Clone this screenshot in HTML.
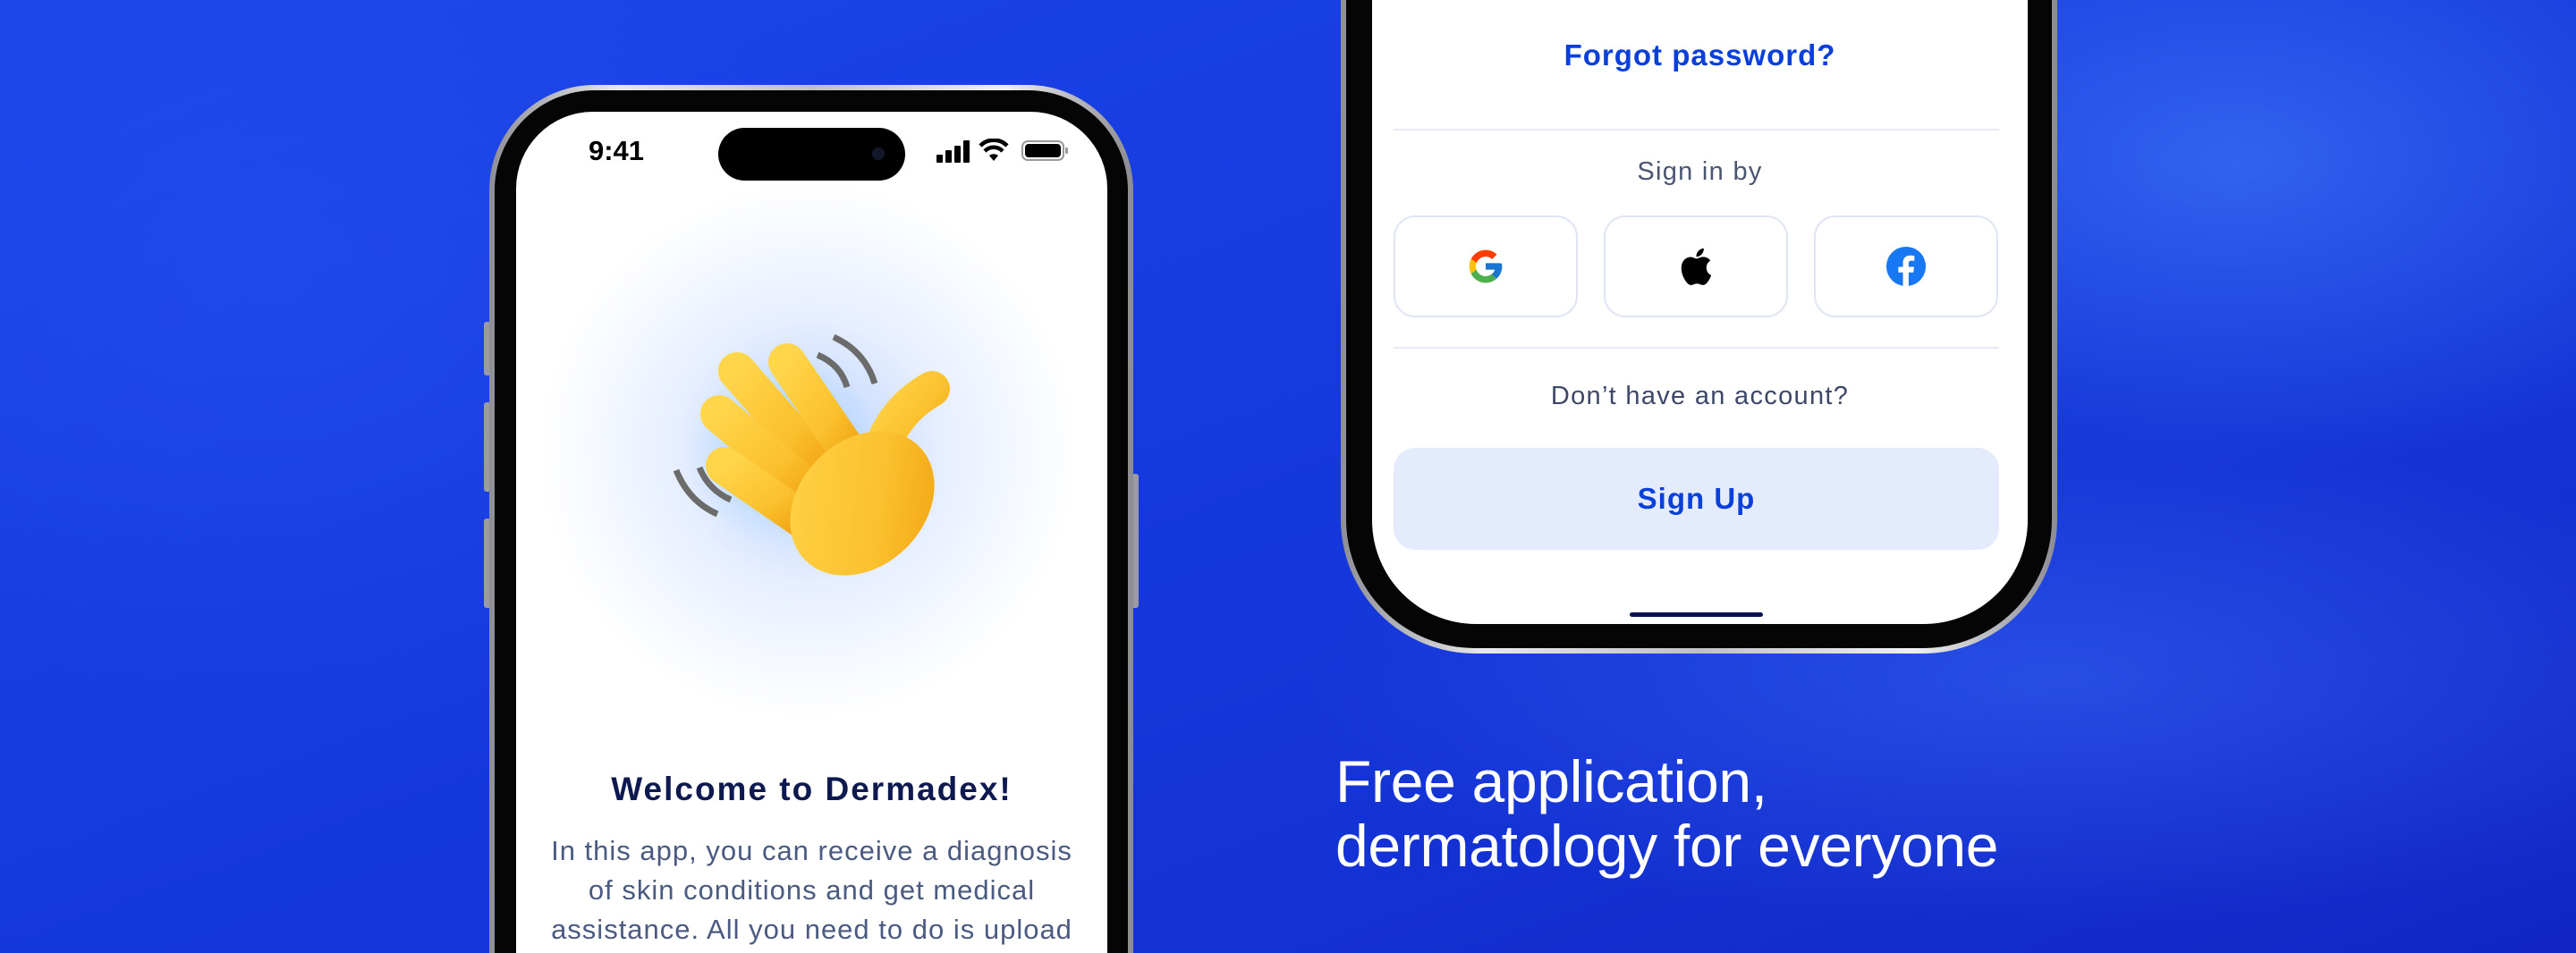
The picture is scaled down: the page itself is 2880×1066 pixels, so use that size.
<!DOCTYPE html>
<html><head><meta charset="utf-8"><style>
*{margin:0;padding:0;box-sizing:border-box}
html,body{width:2880px;height:1066px;overflow:hidden}
body{font-family:"Liberation Sans",sans-serif}
#w{position:relative;width:2880px;height:1066px;overflow:hidden;
background:
radial-gradient(ellipse 900px 500px at 2500px 180px, rgba(80,140,255,.5), rgba(80,140,255,0) 70%),
radial-gradient(ellipse 1200px 400px at 2300px 760px, rgba(70,120,250,.4), rgba(70,120,250,0) 70%),
radial-gradient(ellipse 900px 700px at 300px 300px, rgba(40,80,240,.5), rgba(40,80,240,0) 70%),
linear-gradient(160deg,#1d46ea 0%,#163be0 40%,#1433d6 70%,#1126c4 100%);}
.abs{position:absolute}
.frame{position:absolute;background:linear-gradient(90deg,#8d8f95,#e8e8ea 20%,#bfc0c4 50%,#f0f0f2 80%,#8b8c92);}
.bezel{position:absolute;background:#050505}
.screen{position:absolute;background:#fff;overflow:hidden}
.c{position:absolute;left:0;right:0;text-align:center}
.btn{position:absolute;width:206px;height:114px;border:2px solid #dfe5f3;border-radius:24px;background:#fff;display:flex;align-items:center;justify-content:center}
</style></head><body><div id="w">

<!-- Left phone -->
<div class="abs" style="left:541px;top:360px;width:8px;height:60px;background:#9a9ca2;border-radius:3px"></div>
<div class="abs" style="left:541px;top:450px;width:8px;height:100px;background:#9a9ca2;border-radius:3px"></div>
<div class="abs" style="left:541px;top:580px;width:8px;height:100px;background:#9a9ca2;border-radius:3px"></div>
<div class="abs" style="left:1265px;top:530px;width:8px;height:150px;background:#9a9ca2;border-radius:3px"></div>
<div class="frame" style="left:547px;top:95px;width:720px;height:971px;border-radius:118px 118px 0 0"></div>
<div class="bezel" style="left:553px;top:101px;width:708px;height:965px;border-radius:112px 112px 0 0"></div>
<div class="screen" style="left:577px;top:125px;width:661px;height:941px;border-radius:86px 86px 0 0">
  <div class="abs" style="left:0;top:0;width:661px;height:700px;background:radial-gradient(circle 300px at 327px 380px,rgba(120,170,255,.55),rgba(160,190,255,.25) 50%,rgba(255,255,255,0) 100%)"></div>
  <div class="abs" style="left:190px;top:270px;width:220px;height:220px;background:radial-gradient(circle,rgba(130,210,255,.45),rgba(130,210,255,0) 70%)"></div>
  <div class="abs" style="left:77px;top:26px;width:70px;font-size:31px;font-weight:700;color:#000;text-align:center">9:41</div>
  <div class="abs" style="left:226px;top:18px;width:209px;height:59px;background:#000;border-radius:30px"></div>
  <div class="abs" style="left:398px;top:40px;width:14px;height:14px;background:#12182a;border-radius:50%"></div>
  <div class="abs" style="left:470px;top:48px;width:7px;height:9px;background:#000;border-radius:1px"></div>
  <div class="abs" style="left:480px;top:43px;width:7px;height:14px;background:#000;border-radius:1px"></div>
  <div class="abs" style="left:490px;top:38px;width:7px;height:19px;background:#000;border-radius:1px"></div>
  <div class="abs" style="left:500px;top:32px;width:7px;height:25px;background:#000;border-radius:1px"></div>
  <svg class="abs" style="left:517px;top:30px" width="34" height="26" viewBox="0 0 34 26"><path d="M17 25 L12 19 A8 8 0 0 1 22 19 Z" fill="#000"/><path d="M7 14 A14 14 0 0 1 27 14" stroke="#000" stroke-width="4.5" fill="none"/><path d="M2 8 A21 21 0 0 1 32 8" stroke="#000" stroke-width="4.5" fill="none"/></svg>
  <div class="abs" style="left:565px;top:32px;width:48px;height:23px;border:2px solid #999;border-radius:7px;padding:2px"><div style="width:100%;height:100%;background:#000;border-radius:4px"></div></div>
  <div class="abs" style="left:614px;top:40px;width:3px;height:7px;background:#999;border-radius:1px"></div>
  <!-- hand -->
  <svg class="abs" style="left:165px;top:238px" width="340" height="320" viewBox="0 0 340 320">
    <defs><linearGradient id="h" x1="0" y1="0" x2="1" y2="1"><stop offset="0" stop-color="#ffd54a"/><stop offset=".6" stop-color="#fbc02d"/><stop offset="1" stop-color="#f0a010"/></linearGradient></defs>
    <g transform="translate(0,20)">
    <g stroke="#6b6b6b" stroke-width="7" fill="none">
      <path d="M190 -6 Q225 10 236 46"/><path d="M172 14 Q198 25 205 50"/>
      <path d="M14 143 Q28 178 60 192"/><path d="M40 140 Q50 165 75 176"/>
    </g>
    <g stroke="url(#h)" stroke-width="42" stroke-linecap="round" fill="none">
      <line x1="82" y1="32" x2="185" y2="150"/>
      <line x1="138" y1="22" x2="215" y2="135"/>
      <line x1="62" y1="80" x2="175" y2="175"/>
      <line x1="68" y1="138" x2="165" y2="205"/>
      <path d="M238 140 Q250 80 300 52" stroke-width="40"/>
    </g>
    <ellipse cx="222" cy="180" rx="90" ry="70" transform="rotate(-45 222 180)" fill="url(#h)"/>
    </g>
  </svg>
  <div class="c" style="top:737px;font-size:37px;font-weight:700;color:#0e1a4f;letter-spacing:2px">Welcome to Dermadex!</div>
  <div class="c" style="top:805px;font-size:31px;line-height:44px;color:#4a5a80;padding:0 10px;letter-spacing:1px">In this app, you can receive a diagnosis<br>of skin conditions and get medical<br>assistance. All you need to do is upload</div>
</div>

<!-- Right phone -->
<div class="frame" style="left:1499px;top:-400px;width:801px;height:1131px;border-radius:150px"></div>
<div class="bezel" style="left:1505px;top:-400px;width:789px;height:1125px;border-radius:144px"></div>
<div class="screen" style="left:1534px;top:-400px;width:733px;height:1098px;border-radius:116px">
  <div class="c" style="top:443px;font-size:33px;font-weight:700;color:#0a3fd9;letter-spacing:1px">Forgot password?</div>
  <div class="abs" style="left:24px;top:544px;width:677px;height:2px;background:#e6eaf2"></div>
  <div class="c" style="top:576px;font-size:29px;color:#4a5570;letter-spacing:1.3px">Sign in by</div>
  <div class="btn" style="left:24px;top:641px">
    <svg width="44" height="44" viewBox="0 0 48 48"><path d="M43.6 20.5H42V20H24v8h11.3C33.7 32.7 29.2 36 24 36c-6.6 0-12-5.4-12-12s5.4-12 12-12c3.1 0 5.8 1.2 7.9 3.1l5.7-5.7C34 6.1 29.3 4 24 4 13 4 4 13 4 24s9 20 20 20 20-9 20-20c0-1.3-.1-2.4-.4-3.5z" fill="#FFC107"/><path d="M6.3 14.7l6.6 4.8C14.7 15.1 19 12 24 12c3.1 0 5.8 1.2 7.9 3.1l5.7-5.7C34 6.1 29.3 4 24 4 16.3 4 9.7 8.3 6.3 14.7z" fill="#FF3D00"/><path d="M24 44c5.2 0 9.9-2 13.4-5.2l-6.2-5.2C29.2 35.1 26.7 36 24 36c-5.2 0-9.6-3.3-11.3-8l-6.5 5C9.5 39.6 16.2 44 24 44z" fill="#4CAF50"/><path d="M43.6 20.5H42V20H24v8h11.3c-.8 2.2-2.2 4.2-4.1 5.6l6.2 5.2C37 39.2 44 34 44 24c0-1.3-.1-2.4-.4-3.5z" fill="#1976D2"/></svg>
  </div>
  <div class="btn" style="left:259px;top:641px">
    <svg width="38" height="44" viewBox="0 0 384 470"><path fill="#000" d="M318 250c-1-56 46-83 48-84-26-38-67-44-81-44-34-4-67 20-84 20-18 0-44-20-73-19-37 1-72 22-91 56-39 68-10 168 28 223 18 27 40 57 69 56 28-1 38-18 72-18 33 0 43 18 72 17 30 0 49-27 67-54 21-31 30-61 30-63-1 0-57-22-57-90zM263 88c15-18 26-44 23-69-22 1-49 15-65 33-14 16-27 42-23 67 25 2 50-13 65-31z"/></svg>
  </div>
  <div class="btn" style="left:494px;top:641px">
    <svg width="46" height="46" viewBox="0 0 48 48"><circle cx="24" cy="24" r="23" fill="#1877F2"/><path d="M27 47V31h5.5l.9-6.5H27v-4c0-1.9.6-3.2 3.3-3.2h3.4v-5.8c-.6-.1-2.6-.3-5-.3-5 0-8.3 3-8.3 8.5v4.8H15V31h5.4v16z" fill="#fff"/></svg>
  </div>
  <div class="abs" style="left:24px;top:788px;width:677px;height:2px;background:#e6eaf2"></div>
  <div class="c" style="top:827px;font-size:29px;color:#3d4868;letter-spacing:1.3px">Don’t have an account?</div>
  <div class="abs" style="left:24px;top:901px;width:677px;height:114px;background:#e3ebfd;border-radius:24px;display:flex;align-items:center;justify-content:center;font-size:33px;font-weight:700;color:#0a3fd9;letter-spacing:1px">Sign Up</div>
  <div class="abs" style="left:288px;top:1085px;width:149px;height:5px;background:#0a1250;border-radius:3px"></div>
</div>

<div class="abs" style="left:1493px;top:838px;font-size:66px;line-height:72px;color:#fff;font-weight:300;letter-spacing:-0.3px">Free application,<br>dermatology for everyone</div>
</div></body></html>
